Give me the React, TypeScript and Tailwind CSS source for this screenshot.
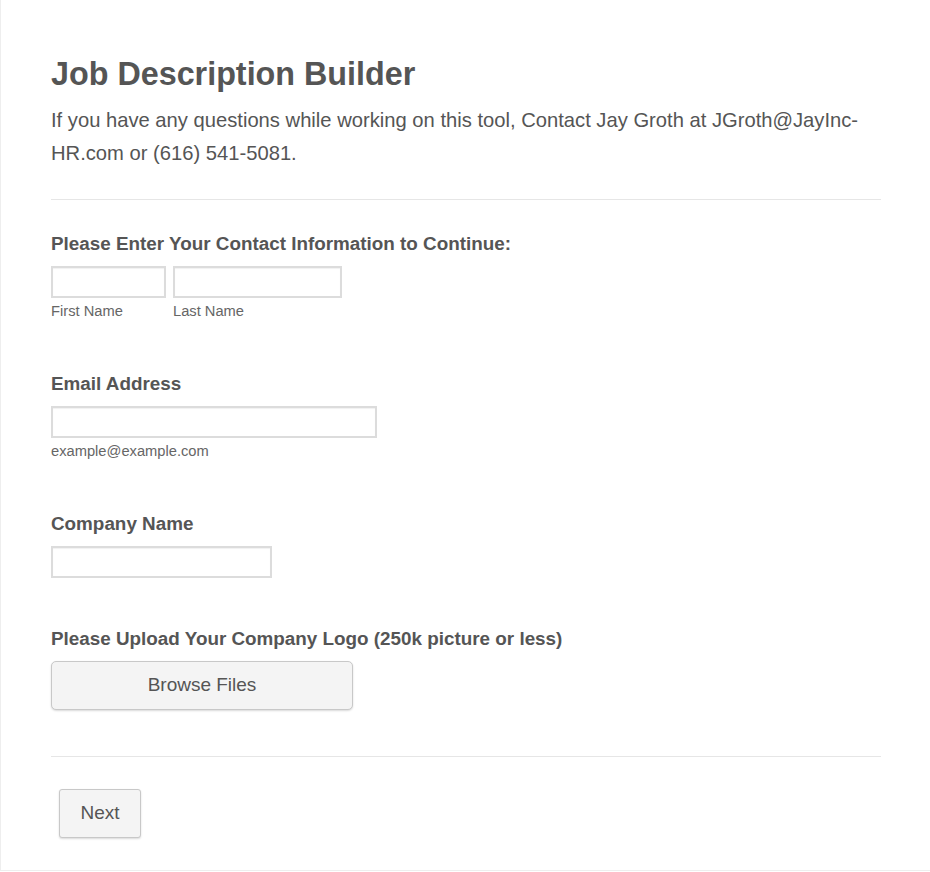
import * as React from "react";

const font = { fontFamily: '"Liberation Sans", Arial, sans-serif' };

function Field({ label, children }: { label: string; children: React.ReactNode }) {
  return (
    <div>
      <label className="block text-[18.85px] font-bold leading-[20px] text-[#555]">{label}</label>
      {children}
    </div>
  );
}

const inputCls =
  "block h-[32px] border-2 border-[#dcdcdc] bg-white px-2 text-[15px] text-[#555] outline-none shadow-[inset_0_1px_1px_rgba(0,0,0,0.06)]";

const hintCls = "block text-[14.7px] leading-[16px] text-[#666]";

export default function App() {
  return (
    <div className="min-h-[872px] bg-white" style={font}>
      <div className="w-[930px] border-l border-b border-[#eeeeee] h-[871px]">
        <div className="px-[50px] pt-[56px] text-[#555]">
          <h1 className="text-[32.3px] font-bold leading-[36px]">Job Description Builder</h1>
          <p className="mt-[12px] w-[830px] text-[20.2px] leading-[33px]">
            If you have any questions while working on this tool, Contact Jay Groth at JGroth@JayInc-HR.com or (616) 541-5081.
          </p>
          <div className="mt-[29px] h-px w-[830px] bg-[#e6e6e6]" />

          <div className="mt-[34px]">
            <Field label="Please Enter Your Contact Information to Continue:">
              <div className="mt-[12px] flex gap-[7px]">
                <div>
                  <input className={`${inputCls} w-[115px]`} />
                  <span className={`mt-[5px] ${hintCls}`}>First Name</span>
                </div>
                <div>
                  <input className={`${inputCls} w-[169px]`} />
                  <span className={`mt-[5px] ${hintCls}`}>Last Name</span>
                </div>
              </div>
            </Field>
          </div>

          <div className="mt-[55px]">
            <Field label="Email Address">
              <input className={`${inputCls} mt-[12px] w-[326px]`} />
              <span className={`mt-[5px] ${hintCls}`}>example@example.com</span>
            </Field>
          </div>

          <div className="mt-[55px]">
            <Field label="Company Name">
              <input className={`${inputCls} mt-[12px] w-[221px]`} />
            </Field>
          </div>

          <div className="mt-[51px]">
            <Field label="Please Upload Your Company Logo (250k picture or less)">
              <button className="mt-[12px] block h-[49px] w-[302px] rounded-[5px] border border-[#c8c8c8] bg-[#f4f4f4] text-[19px] text-[#555] shadow-[0_1px_2px_rgba(0,0,0,0.15)]">
                Browse Files
              </button>
            </Field>
          </div>

          <div className="mt-[46px] h-px w-[830px] bg-[#e6e6e6]" />

          <div className="mt-[32px] pl-[8px]">
            <button className="h-[49px] w-[82px] rounded-[3px] border border-[#c8c8c8] bg-[#f4f4f4] text-[19px] text-[#555] shadow-[0_1px_2px_rgba(0,0,0,0.15)]">
              Next
            </button>
          </div>
        </div>
      </div>
    </div>
  );
}
